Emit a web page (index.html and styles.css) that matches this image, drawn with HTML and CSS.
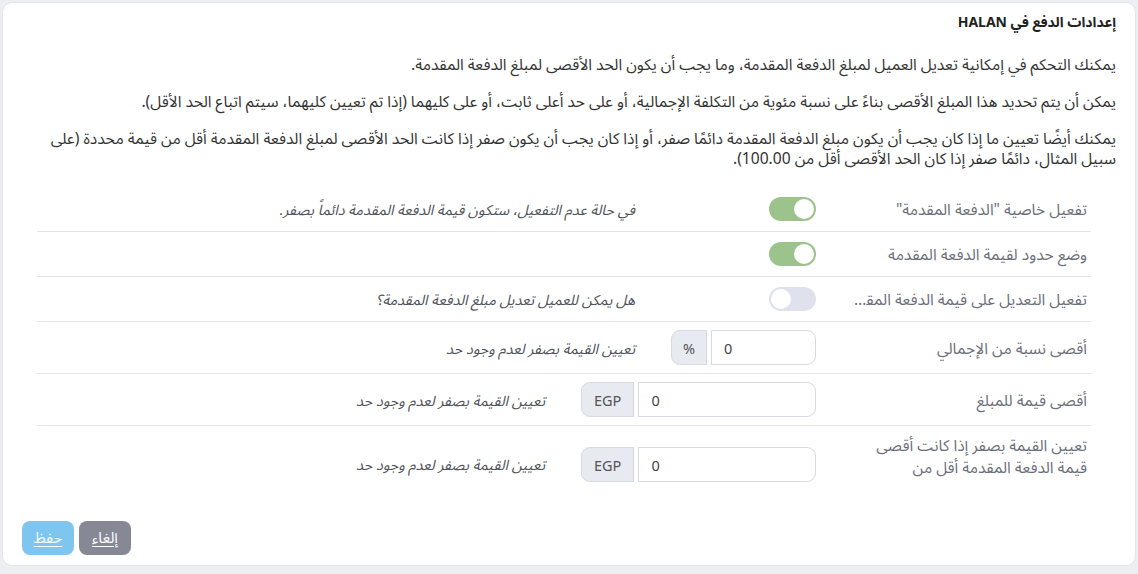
FILE: index.html
```html
<!DOCTYPE html>
<html lang="ar" dir="rtl">
<head>
<meta charset="utf-8">
<title>إعدادات الدفع في HALAN</title>
<link rel="stylesheet" href="styles.css">
</head>
<body>
<div class="card">
  <h1 class="title">إعدادات الدفع في HALAN</h1>
  <p class="desc">يمكنك التحكم في إمكانية تعديل العميل لمبلغ الدفعة المقدمة، وما يجب أن يكون الحد الأقصى لمبلغ الدفعة المقدمة.</p>
  <p class="desc">يمكن أن يتم تحديد هذا المبلغ الأقصى بناءً على نسبة مئوية من التكلفة الإجمالية، أو على حد أعلى ثابت، أو على كليهما (إذا تم تعيين كليهما، سيتم اتباع الحد الأقل).</p>
  <p class="desc">يمكنك أيضًا تعيين ما إذا كان يجب أن يكون مبلغ الدفعة المقدمة دائمًا صفر، أو إذا كان يجب أن يكون صفر إذا كانت الحد الأقصى لمبلغ الدفعة المقدمة أقل من قيمة محددة (على سبيل المثال، دائمًا صفر إذا كان الحد الأقصى أقل من 100.00).</p>

  <div class="rows">
    <div class="row">
      <div class="label">تفعيل خاصية "الدفعة المقدمة"</div>
      <div class="control"><span class="toggle on"><span class="knob"></span></span></div>
      <div class="hint">في حالة عدم التفعيل، ستكون قيمة الدفعة المقدمة دائماً بصفر.</div>
    </div>
    <div class="row">
      <div class="label">وضع حدود لقيمة الدفعة المقدمة</div>
      <div class="control"><span class="toggle on"><span class="knob"></span></span></div>
    </div>
    <div class="row">
      <div class="label truncate">تفعيل التعديل على قيمة الدفعة المقدمة</div>
      <div class="control"><span class="toggle"><span class="knob"></span></span></div>
      <div class="hint">هل يمكن للعميل تعديل مبلغ الدفعة المقدمة؟</div>
    </div>
    <div class="row">
      <div class="label">أقصى نسبة من الإجمالي</div>
      <div class="control">
        <div class="group narrow">
          <input class="field" type="text" value="0">
          <span class="addon">%</span>
        </div>
      </div>
      <div class="hint">تعيين القيمة بصفر لعدم وجود حد</div>
    </div>
    <div class="row">
      <div class="label">أقصى قيمة للمبلغ</div>
      <div class="control wide">
        <div class="group">
          <input class="field" type="text" value="0">
          <span class="addon">EGP</span>
        </div>
      </div>
      <div class="hint">تعيين القيمة بصفر لعدم وجود حد</div>
    </div>
    <div class="row last">
      <div class="label multi">تعيين القيمة بصفر إذا كانت أقصى قيمة الدفعة المقدمة أقل من</div>
      <div class="control wide">
        <div class="group">
          <input class="field" type="text" value="0">
          <span class="addon">EGP</span>
        </div>
      </div>
      <div class="hint">تعيين القيمة بصفر لعدم وجود حد</div>
    </div>
  </div>

  <div class="footer">
    <button class="btn cancel" type="button">إلغاء</button>
    <button class="btn save" type="button">حفظ</button>
  </div>
</div>
</body>
</html>
```
FILE: styles.css
```css
html, body {
  margin: 0;
  padding: 0;
}
body {
  background: #eceef2;
  padding: 2px 2px 8px 2px;
  font-family: "Noto Sans", "Noto Sans Arabic", "DejaVu Sans", sans-serif;
  font-size: 15.6px;
  color: #333;
}
.card {
  background: #fff;
  border: 1px solid #e3e5ea;
  border-radius: 10px;
  padding: 10px 19px 12px 19px;
  box-sizing: border-box;
  height: 564px;
}
.title {
  margin: 0;
  font-size: 14px;
  line-height: 18px;
  font-weight: 700;
  color: #222;
}
.desc {
  margin: 0;
  line-height: 20px;
  color: #333;
}
.title + .desc {
  margin-top: 23px;
}
.desc + .desc {
  margin-top: 17px;
}
.rows {
  margin: 19px 25px 0 15px;
}
.row {
  display: flex;
  align-items: center;
  padding: 8px 4px 8px 0;
  border-bottom: 1px solid #e4e5ea;
}
.row.last {
  border-bottom: none;
  align-items: flex-start;
}
.label {
  width: 240px;
  flex: none;
  margin-left: 31px;
  color: #6b6f7a;
  line-height: 20px;
}
.label.truncate {
  white-space: nowrap;
  overflow: hidden;
  text-overflow: ellipsis;
}
.label.multi {
  line-height: 22px;
}
.control {
  width: 145px;
  height: 28px;
  flex: none;
  display: flex;
  align-items: center;
  justify-content: flex-start;
}
.row:nth-child(n+4) .control {
  height: 35px;
}
.control.wide {
  width: 235px;
}
.row.last .control {
  margin-top: 13px;
}
.hint {
  margin-right: 36px;
  font-style: italic;
  font-size: 14.5px;
  color: #4f535a;
  line-height: 20px;
}
.row.last .hint {
  margin-top: 13px;
  line-height: 35px;
}
.toggle {
  position: relative;
  display: block;
  width: 47px;
  height: 24px;
  border-radius: 12px;
  background: #dfe1ed;
  box-sizing: border-box;
}
.toggle .knob {
  position: absolute;
  top: 2px;
  left: 2px;
  width: 20px;
  height: 20px;
  border-radius: 50%;
  background: #fff;
}
.toggle.on {
  background: #9bc38b;
}
.toggle.on .knob {
  left: 25px;
}
.group {
  display: flex;
  gap: 4px;
  width: 100%;
  height: 35px;
}
.field {
  flex: 1;
  min-width: 0;
  height: 35px;
  box-sizing: border-box;
  border: 1px solid #d6d9e4;
  border-radius: 0 9px 9px 0;
  padding: 0 12px;
  direction: ltr;
  text-align: left;
  font-family: inherit;
  font-size: 14.5px;
  color: #444;
  background: #fff;
  outline: none;
}
.addon {
  flex: none;
  box-sizing: border-box;
  height: 35px;
  padding: 0 12px;
  min-width: 36px;
  display: flex;
  align-items: center;
  justify-content: center;
  background: #e8eaf2;
  border: 1px solid #d6d9e4;
  border-radius: 9px 0 0 9px;
  color: #555;
  font-size: 14.5px;
}
.group.narrow .addon {
  width: 36px;
  padding: 0;
}
.footer {
  display: flex;
  justify-content: flex-end;
  gap: 5px;
  margin-top: 31px;
}
.btn {
  width: 52px;
  height: 34px;
  border: none;
  border-radius: 8px;
  color: #fff;
  font-family: inherit;
  font-size: 15px;
  text-decoration: underline;
  text-underline-offset: 3px;
  cursor: pointer;
}
.btn.cancel {
  background: #868895;
}
.btn.save {
  background: #7ec6f0;
}
```
